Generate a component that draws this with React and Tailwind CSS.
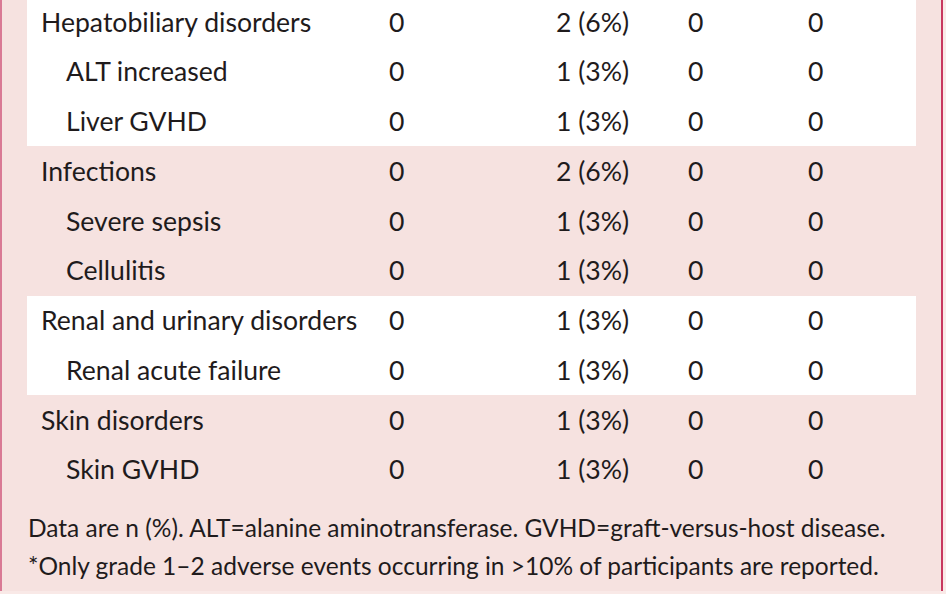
import React from 'react';

// Adverse events table fragment (grade 1–2 rows)
const bands = [
  {
    white: true,
    rows: [
      { label: 'Hepatobiliary disorders', sub: false, vals: ['0', '2 (6%)', '0', '0'] },
      { label: 'ALT increased', sub: true, vals: ['0', '1 (3%)', '0', '0'] },
      { label: 'Liver GVHD', sub: true, vals: ['0', '1 (3%)', '0', '0'] },
    ],
  },
  {
    white: false,
    rows: [
      { label: 'Infections', sub: false, vals: ['0', '2 (6%)', '0', '0'] },
      { label: 'Severe sepsis', sub: true, vals: ['0', '1 (3%)', '0', '0'] },
      { label: 'Cellulitis', sub: true, vals: ['0', '1 (3%)', '0', '0'] },
    ],
  },
  {
    white: true,
    rows: [
      { label: 'Renal and urinary disorders', sub: false, vals: ['0', '1 (3%)', '0', '0'] },
      { label: 'Renal acute failure', sub: true, vals: ['0', '1 (3%)', '0', '0'] },
    ],
  },
  {
    white: false,
    rows: [
      { label: 'Skin disorders', sub: false, vals: ['0', '1 (3%)', '0', '0'] },
      { label: 'Skin GVHD', sub: true, vals: ['0', '1 (3%)', '0', '0'] },
    ],
  },
];

const Row = ({ row }) => (
  <div className="grid grid-cols-[362px_167px_132px_120px_1fr] h-[49.75px] items-center">
    <span className={row.sub ? 'pl-[39px]' : 'pl-[14px]'}>{row.label}</span>
    {row.vals.map((v, i) => (
      <span key={i}>{v}</span>
    ))}
  </div>
);

export default function App() {
  return (
    <div className="w-[946px] h-[594px] overflow-hidden bg-[#f9e9e7]">
      <div
        className="w-[943px] h-[594px] bg-[#f6e2e0] border-l-2 border-l-[#d97a95] border-r-2 border-r-[#c8375f] text-[#1f1b1c] text-[26.6px] leading-none"
        style={{ fontFamily: 'Lato, "Open Sans", sans-serif' }}
      >
        <div className="mt-[-3px] pl-[25px] pr-[25px]">
          {bands.map((b, i) => (
            <div key={i} className={b.white ? 'bg-white' : 'bg-[#f6e2e0]'}>
              {b.rows.map((r) => (
                <Row key={r.label} row={r} />
              ))}
            </div>
          ))}
        </div>
        <div className="pl-[26px] pt-[14px] text-[24.5px] leading-[38px]">
          <p>Data are n (%). ALT=alanine aminotransferase. GVHD=graft-versus-host disease.</p>
          <p>*Only grade 1–2 adverse events occurring in &gt;10% of participants are reported.</p>
        </div>
      </div>
    </div>
  );
}
